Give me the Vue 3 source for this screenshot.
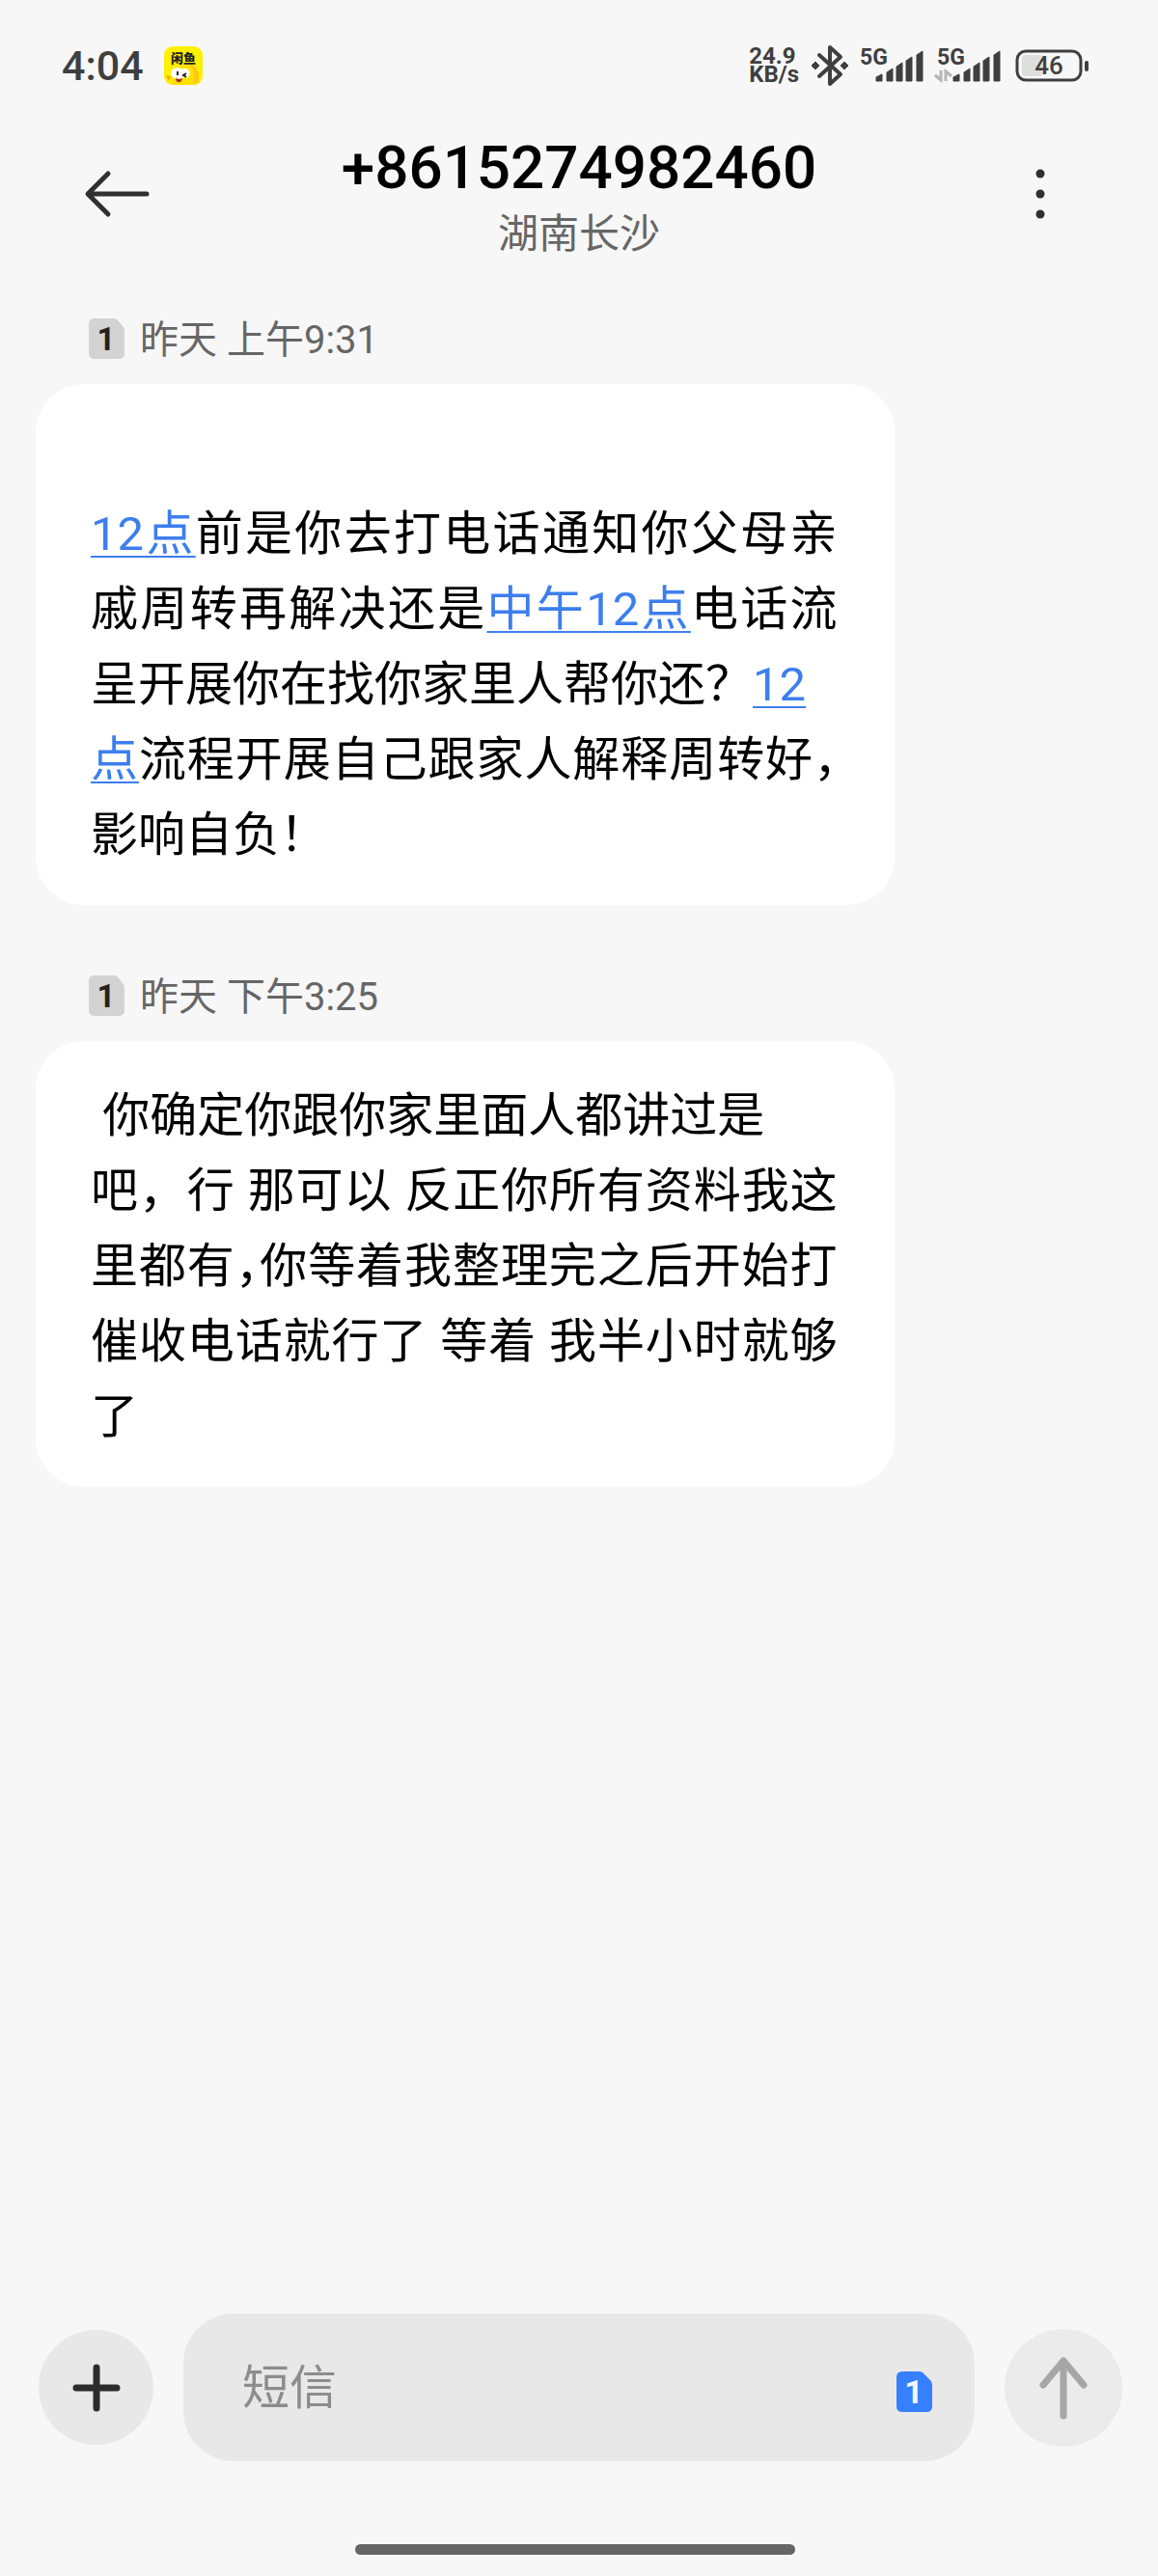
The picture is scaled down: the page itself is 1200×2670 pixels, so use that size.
<script setup>
import { ref } from 'vue'

const draft = ref('')

const signals = [
  { id: 'sim1', data: false },
  { id: 'sim2', data: true }
]
const bars = [
  'M16 41v-4l6-3v7z',
  'M27 41V32l6-4v13z',
  'M37 41V26l6-4v19z',
  'M47 41V20l6-4v25z',
  'M58 41V14l6-4v31z'
]

const messages = [
  {
    id: 1,
    sim: 1,
    time: '昨天 上午9:31',
    parts: [
      { br: true },
      { link: true, text: '12点' },
      { text: '前是你去打电话通知你父母亲戚周转再解决还是' },
      { link: true, text: '中午12点' },
      { text: '电话流呈开展你在找你家里人帮你还？' },
      { link: true, text: '12' },
      { br: true },
      { link: true, text: '点' },
      { tight: true, text: '流程开展自己跟家人解释周转好，影响自负！' }
    ]
  },
  {
    id: 2,
    sim: 1,
    time: '昨天 下午3:25',
    parts: [
      { text: '\u00a0你确定你跟你家里面人都讲过是' },
      { br: true },
      { text: '吧，行 那可以 反正你所有资料我这' },
      { tight: true, text: '里都有，你等着我整理完之后开始打催收电话就行了 等着 我半小时就够了' }
    ]
  }
]
</script>

<template>
  <div class="screen" lang="zh-CN">
    <div class="status">
      <div class="status-left">
        <span class="clock">4:04</span>
        <svg class="app-icon" viewBox="0 0 40 40" aria-hidden="true">
          <defs>
            <clipPath id="tile"><rect width="40" height="40" rx="9" /></clipPath>
          </defs>
          <g clip-path="url(#tile)">
            <rect width="40" height="40" fill="#fff000" />
            <path d="M8 40c-2-12 3-20 13-21 10-1 16 7 16 21z" fill="#ffe100" />
            <path d="M26 18c8 2 12 10 9 20h-5c3-8 1-14-4-20z" fill="#ffc51a" />
            <path d="M2 30l5 1-2 5z" fill="#f2a900" />
            <ellipse cx="14" cy="28" rx="7" ry="6" fill="#fff" />
            <ellipse cx="21" cy="28" rx="6" ry="5" fill="#fff" />
            <path d="M14 26v4M23 28l-3 2 3 2" fill="none" stroke="#222" stroke-width="2" />
            <path d="M12 33q4 2 7 0-1 5-4 4-3 0-3-4z" fill="#a0301c" />
          </g>
          <text x="20" y="17" text-anchor="middle" font-size="13" font-weight="900" fill="#222">闲鱼</text>
        </svg>
      </div>
      <div class="status-right">
        <div class="speed"><span>24.9</span><span>KB/s</span></div>
        <svg class="bluetooth" viewBox="0 0 40 44" aria-label="蓝牙">
          <path d="M9 11l22 20-11 10V3l11 10L9 33" fill="none" stroke="#3f3f3f" stroke-width="4" stroke-linejoin="round" stroke-linecap="round" />
          <path d="M5 18l4 4-4 4-4-4zM35 18l4 4-4 4-4-4z" fill="#3f3f3f" stroke="#3f3f3f" stroke-linejoin="round" />
        </svg>
        <svg v-for="s in signals" :key="s.id" class="signal" viewBox="0 0 66 50" aria-label="5G">
          <text x="-1" y="24" font-size="23" font-weight="700" fill="#3f3f3f">5G</text>
          <path v-for="b in bars" :key="b" :d="b" fill="#3f3f3f" stroke="#3f3f3f" stroke-linejoin="round" />
          <path v-if="s.data" d="M3 30v10l-6-5M8 41V31l6 5" fill="none" stroke="#b5b5b5" stroke-width="3" />
        </svg>
        <svg class="battery" viewBox="0 0 76 34" aria-label="电量 46%">
          <rect x="7" y="6" width="22" height="22" rx="4" fill="#dedede" />
          <rect x="2" y="2" width="66" height="30" rx="9" fill="none" stroke="#3f3f3f" stroke-width="3" />
          <rect x="72" y="12" width="4" height="11" rx="2" fill="#3f3f3f" />
          <text x="35" y="26" text-anchor="middle" font-size="26" font-weight="500" fill="#3f3f3f">46</text>
        </svg>
      </div>
    </div>

    <header class="header">
      <button class="icon-button" type="button" aria-label="返回">
        <svg width="70" height="52" viewBox="0 0 70 52" fill="none" stroke="#303030" stroke-width="5" stroke-linecap="round" stroke-linejoin="round">
          <path d="M65 26H5M25 5L4 26l21 21" />
        </svg>
      </button>
      <div class="heading">
        <h1>+8615274982460</h1>
        <p>湖南长沙</p>
      </div>
      <button class="icon-button" type="button" aria-label="更多">
        <svg width="70" height="52" viewBox="0 0 70 52" fill="#303030">
          <circle cx="35" cy="5" r="4.5" /><circle cx="35" cy="26" r="4.5" /><circle cx="35" cy="47" r="4.5" />
        </svg>
      </button>
    </header>

    <main class="thread">
      <article v-for="m in messages" :key="m.id" class="message">
        <div class="meta">
          <svg class="sim" viewBox="0 0 37 42" aria-hidden="true">
            <path d="M6 0h20q3 0 5 3l4 5q2 2 2 5v23q0 6-6 6H6q-6 0-6-6V6q0-6 6-6z" fill="#d3d3d3" />
            <text x="18" y="33" text-anchor="middle" font-size="33" font-weight="700" fill="#222">{{ m.sim }}</text>
          </svg>
          <time>{{ m.time }}</time>
        </div>
        <p class="bubble"><template v-for="(p, i) in m.parts" :key="i"><br v-if="p.br"><a v-else-if="p.link" href="#">{{ p.text }}</a><span v-else :class="{ tight: p.tight }">{{ p.text }}</span></template></p>
      </article>
    </main>

    <form class="composer" @submit.prevent>
      <button class="round add" type="button" aria-label="添加">
        <svg width="50" height="50" viewBox="0 0 50 50" fill="none" stroke="#2c2c2c" stroke-width="7" stroke-linecap="round">
          <path d="M25 4v42M4 25h42" />
        </svg>
      </button>
      <div class="field">
        <input v-model="draft" type="text" placeholder="短信" aria-label="短信">
        <button class="sim-button" type="button" aria-label="卡1">
          <svg class="sim" viewBox="0 0 37 42" aria-hidden="true">
            <path d="M6 0h18q3 0 5 3l6 6q2 2 2 5v22q0 6-6 6H6q-6 0-6-6V6q0-6 6-6z" fill="#3480ff" />
            <text x="18" y="33" text-anchor="middle" font-size="34" font-weight="700" fill="#f2f6ff">1</text>
          </svg>
        </button>
      </div>
      <button class="round send" type="submit" aria-label="发送">
        <svg width="52" height="66" viewBox="0 0 52 66" fill="none" stroke="#a6a6a6" stroke-width="7" stroke-linecap="round" stroke-linejoin="round">
          <path d="M26 62V5M5 30L26 5l21 25" />
        </svg>
      </button>
    </form>
    <div class="home-bar"></div>
  </div>
</template>

<style>
body {
  margin: 0;
  background: #f7f7f7;
}
</style>

<style scoped>
.screen {
  display: flex;
  flex-direction: column;
  box-sizing: border-box;
  min-height: 100vh;
  background: #f7f7f7;
  color: #000;
  font-family: Roboto, "Noto Sans CJK SC", sans-serif;
}
.screen * {
  box-sizing: border-box;
}
svg {
  display: block;
  overflow: visible;
}
button {
  padding: 0;
  border: 0;
  background: none;
  font: inherit;
}
.status {
  display: flex;
  align-items: center;
  justify-content: space-between;
  height: 136px;
  padding: 0 72px 0 64px;
  color: #3f3f3f;
}
.status-left {
  display: flex;
  align-items: center;
  gap: 21px;
}
.clock {
  font-size: 43px;
  font-weight: 500;
  line-height: 48px;
}
.app-icon {
  width: 40px;
  height: 40px;
}
.status-right {
  display: flex;
  align-items: center;
  gap: 12px;
}
.speed {
  display: flex;
  flex-direction: column;
  font-size: 24px;
  font-weight: 700;
  line-height: 19px;
}
.bluetooth {
  width: 40px;
  height: 44px;
}
.signal {
  width: 66px;
  height: 50px;
  margin-right: 2px;
}
.battery {
  width: 76px;
  height: 34px;
}
.header {
  display: flex;
  align-items: center;
  justify-content: space-between;
  height: 130px;
  padding: 0 87px;
}
.icon-button {
  width: 70px;
  height: 70px;
  display: grid;
  place-items: center;
}
.heading {
  padding-top: 8px;
  text-align: center;
}
h1 {
  margin: 0;
  font-size: 62px;
  font-weight: 500;
  line-height: 76px;
}
.heading p {
  margin: 0;
  color: #666;
  font-size: 42px;
  line-height: 62px;
}
.thread {
  display: flex;
  flex-direction: column;
  gap: 64px;
  padding: 55px 37px;
}
.meta {
  display: flex;
  align-items: center;
  gap: 16px;
  height: 60px;
  margin-bottom: 17px;
  padding-left: 55px;
  color: #666;
  font-size: 40px;
  line-height: 60px;
}
.meta time {
  padding-top: 3px;
}
.sim {
  width: 37px;
  height: 42px;
}
.bubble {
  width: 79%;
  max-width: 890px;
  margin: 0;
  padding: 39px 59px 33px 57px;
  border-radius: 50px;
  background: #fff;
  font-size: 49px;
  line-height: 78px;
  text-align: justify;
}
/* half-width punctuation */
.tight {
  font-feature-settings: "halt";
}
.bubble a {
  color: #3c7eee;
  text-decoration: underline;
  text-decoration-thickness: 2px;
  text-underline-offset: 6px;
}
.composer {
  display: flex;
  align-items: center;
  gap: 31px;
  margin-top: auto;
  padding: 0 37px 0 40px;
}
.round {
  display: grid;
  flex: none;
  place-items: center;
  border-radius: 50%;
}
.add {
  width: 119px;
  height: 119px;
  background: #e8e8e8;
}
.send {
  width: 122px;
  height: 122px;
  background: #ebebeb;
}
.field {
  display: flex;
  flex: 1;
  align-items: center;
  min-width: 0;
  height: 153px;
  padding: 0 44px 0 61px;
  border-radius: 52px;
  background: #e8e8e8;
}
.field input {
  flex: 1;
  min-width: 0;
  padding: 2px 0 0;
  border: 0;
  outline: 0;
  background: none;
  font: inherit;
  font-size: 49px;
  line-height: 78px;
}
.field input::placeholder {
  color: #8c8c8c;
  opacity: 1;
}
.sim-button {
  padding-top: 8px;
}
.home-bar {
  width: 38%;
  height: 11px;
  margin: 86px 0 22px calc(31% - 4px);
  border-radius: 6px;
  background: #666;
}
</style>
